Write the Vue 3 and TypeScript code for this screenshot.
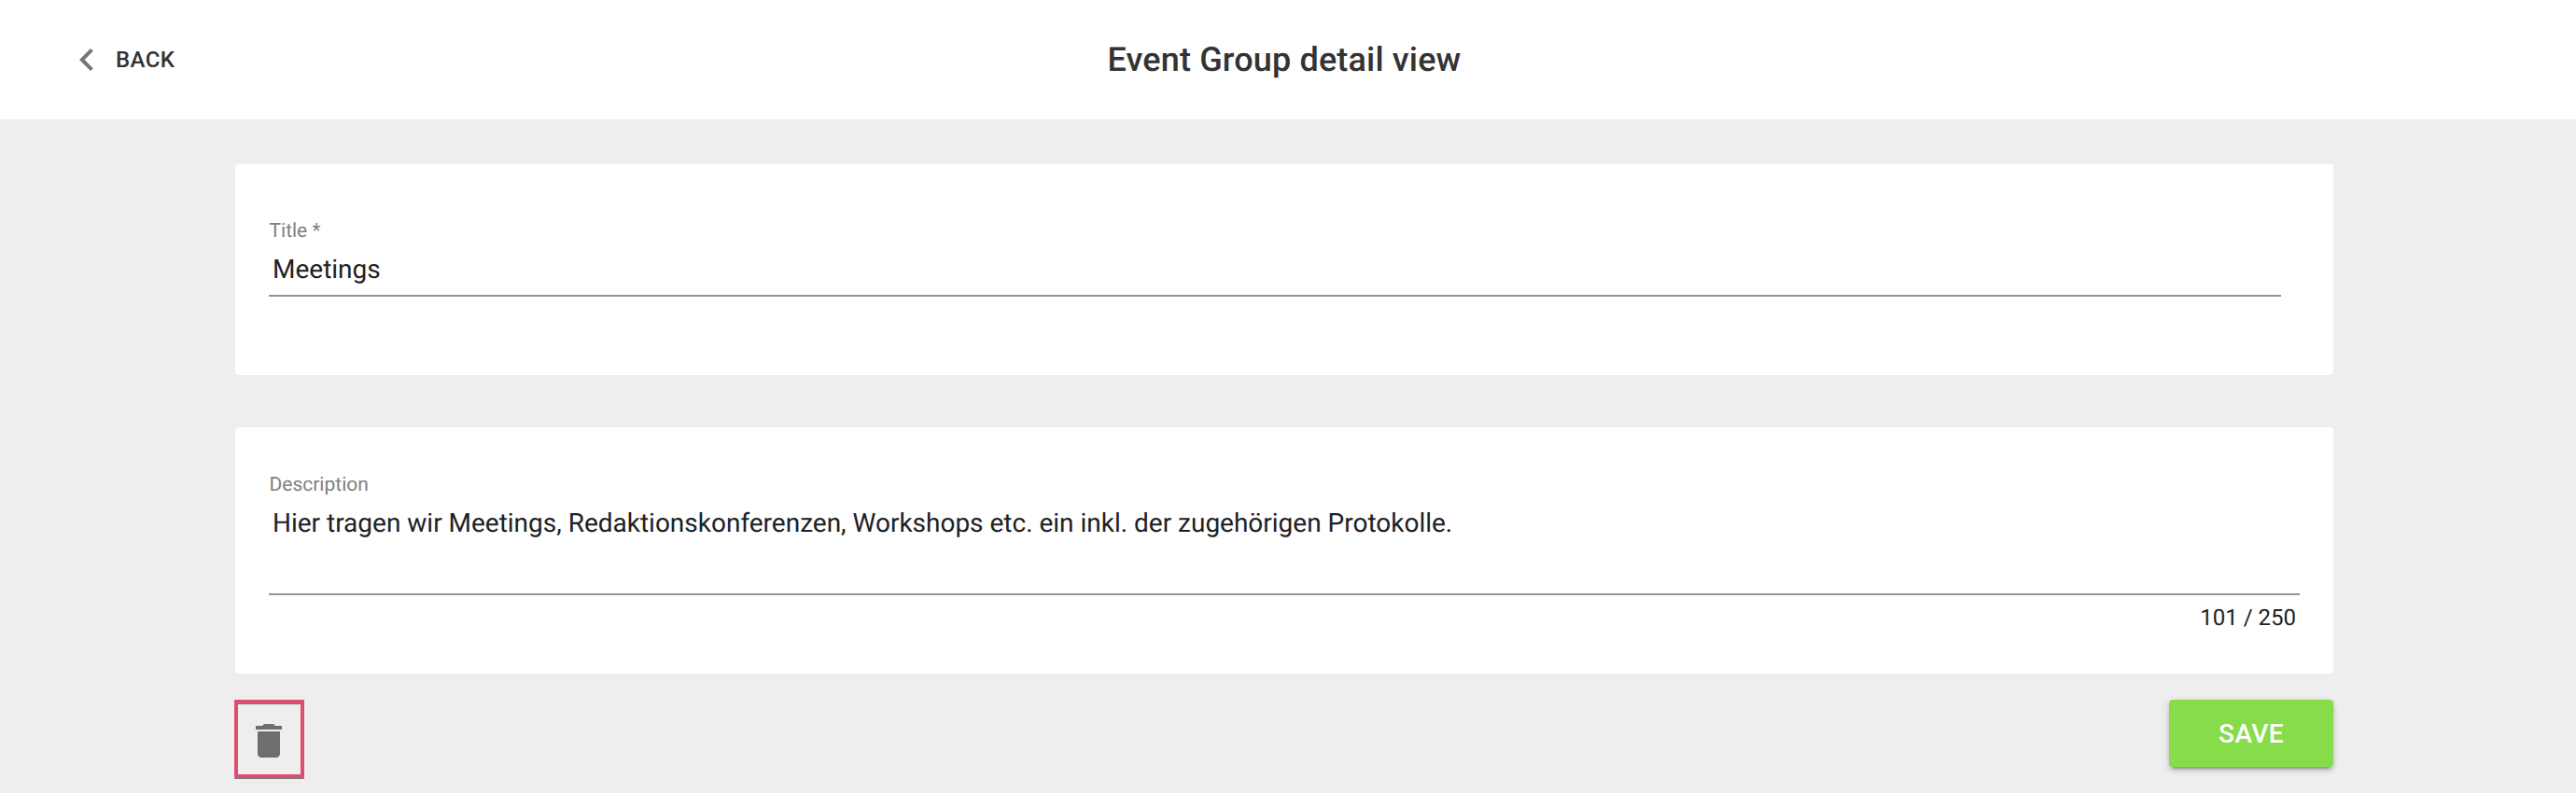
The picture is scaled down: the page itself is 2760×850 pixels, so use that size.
<script setup lang="ts">
const title = 'Meetings'
const description = 'Hier tragen wir Meetings, Redaktionskonferenzen, Workshops etc. ein inkl. der zugehörigen Protokolle.'
const maxLength = 250
</script>

<template>
  <div class="page">
    <header class="topbar">
      <button class="back">
        <svg width="15" height="24" viewBox="8 6 7.5 12"><path d="M15.410 7.410 14 6l-6 6 6 6 1.410-1.410L10.830 12z" fill="#757575" /></svg>
        <span>BACK</span>
      </button>
      <h1>Event Group detail view</h1>
    </header>
    <main>
      <section class="card title-card">
        <div class="label">Title *</div>
        <div class="value">{{ title }}</div>
      </section>
      <section class="card desc-card">
        <div class="label">Description</div>
        <div class="value">{{ description }}</div>
        <div class="counter">{{ description.length }} / {{ maxLength }}</div>
      </section>
      <footer class="actions">
        <button class="trash" aria-label="Delete">
          <svg width="28" height="36" viewBox="5 3 14 18"><path d="M6 19c0 1.100.9 2 2 2h8c1.100 0 2-.9 2-2V7H6v12zM19 4h-3.500l-1-1h-5l-1 1H5v2h14V4z" fill="#6e6e6e" /></svg>
        </button>
        <button class="save">SAVE</button>
      </footer>
    </main>
  </div>
</template>

<style>
body { margin: 0; background: #eee; }
</style>
<style scoped>
.page { width: 2760px; height: 850px; overflow: hidden; background: #eee; font-family: Roboto, sans-serif; color: #212121; text-rendering: geometricPrecision; }
.topbar { height: 128px; background: #fff; display: grid; grid-template-columns: 252px 1fr 260px; align-items: center; }
button { font: inherit; border: 0; background: none; padding: 0; }
.back { display: flex; align-items: center; gap: 24px; padding-left: 85px; font-size: 24px; font-weight: 500; letter-spacing: 0.4px; color: #333; }
h1 { margin: 0; text-align: center; font-size: 36px; font-weight: 500; letter-spacing: 0.15px; color: #333; }
main { width: 2248px; margin-left: 252px; padding-top: 48px; }
.card { background: #fff; border-radius: 4px; box-sizing: border-box; padding-left: 36px; }
.title-card { height: 226px; padding-top: 58px; padding-right: 56px; }
.desc-card { height: 264px; margin-top: 56px; padding-top: 48px; padding-right: 36px; }
.label { box-sizing: border-box; height: 26px; padding-top: 1px; padding-left: 0.5px; font-size: 21px; line-height: 26px; color: #808080; }
.value { font-size: 28px; line-height: 57px; height: 56px; padding-left: 4px; border-bottom: 2px solid #949494; }
.desc-card .value { height: 104px; letter-spacing: -0.007px; }
.counter { text-align: right; font-size: 24px; line-height: 48px; padding-right: 4px; }
.actions { display: flex; justify-content: space-between; align-items: flex-start; margin-top: 28px; }
.trash { width: 75px; height: 84px; margin-left: -1px; padding: 4px 1px 0 0; box-sizing: border-box; border: 4px solid #dc4f72; border-radius: 1px; box-shadow: 0 1px 0 #77777a, inset 0 1px 0 #77777a; display: flex; align-items: center; justify-content: center; }
.save { width: 176px; height: 72px; border-radius: 4px; background: #86dc49; color: #fff; font-size: 28px; font-weight: 500; letter-spacing: 0.4px; box-shadow: 0 6px 2px -4px rgba(0, 0, 0, .2), 0 4px 4px rgba(0, 0, 0, .14), 0 2px 10px rgba(0, 0, 0, .12); }
</style>
